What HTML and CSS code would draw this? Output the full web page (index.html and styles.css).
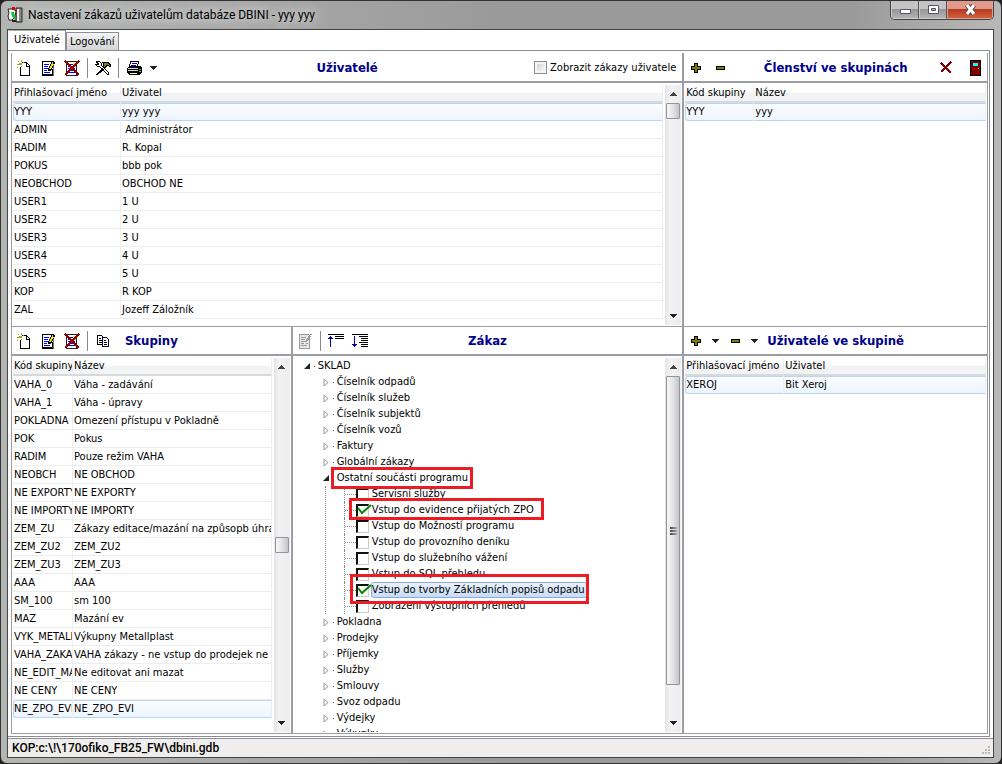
FILE: index.html
```
<!DOCTYPE html>
<html lang="cs">
<head>
<meta charset="utf-8">
<title>Nastavení zákazů uživatelům databáze DBINI - yyy yyy</title>
<link rel="stylesheet" href="styles.css">
</head>
<body>
<svg class="sprite" aria-hidden="true">
  <symbol id="i-new" viewBox="0 0 16 16">
    <path d="M4 4h5l4 4v7H4z" fill="#fff"/>
    <path d="M6 2.500h4.500l3 3V15.500H4.500V7M10.500 3v3h3" fill="none" stroke="#000"/>
    <path d="M2 1h1v1H2zM5 0h1v2H5zM1 4h2v1H1zM3 3h3v2H3zM7 2h1v1H7zM5 6h1v1H5zM1 7h1v1H1z" fill="#a8a020"/>
  </symbol>
  <symbol id="i-edit" viewBox="0 0 16 16">
    <path d="M2 2h10v13H2z" fill="#fff"/>
    <path d="M2.500 1.500h9M2.500 1v14M12.500 9v6" fill="none" stroke="#000"/>
    <path d="M2 15h11" stroke="#000" stroke-width="2"/>
    <path d="M13.500 6v10" stroke="#777"/>
    <path d="M4 4.500h5M4 6.500h4M4 8.500h4M4 10.500h3M9 10.500h2M4 12.500h6" stroke="#00f" stroke-width="1.500"/>
    <path d="M8 8h1V6h1V4h1V2h1V1h2v1h1v2h-1v2h-1v2h-1v2h-2v1H8z" fill="#000"/>
    <path d="M9 8h1V6h1V4h1V2h1v2h1v1h-1v1h-1v2h-1v1H9z" fill="#ffe000"/>
  </symbol>
  <symbol id="i-edit-off" viewBox="0 0 16 16">
    <path d="M2 1h10v14H2z" fill="#e8e8e8"/>
    <path d="M2.500 1.500h9M2.500 1v14.500h10V5" fill="none" stroke="#999"/>
    <path d="M4 4.500h5M4 6.500h4M4 8.500h4M4 10.500h3M9 10.500h2M4 12.500h6M13 1.500h2" stroke="#999"/>
    <path d="M8 9l4-7 2 1-4 6z" fill="#999"/>
  </symbol>
  <symbol id="i-del" viewBox="0 0 16 16">
    <path d="M3 2h9v12H3z" fill="#fff"/>
    <path d="M2 1.500h11M2.500 1v14M12.500 5v10M2 15.500h12" fill="none" stroke="#222"/>
    <path d="M4 4.500h7M4 6.500h7M4 8.500h7M4 10.500h7M4 12.500h7" stroke="#00f"/>
    <path d="M9 3h3v4H9z" fill="#ffe000"/>
    <path d="M1 1l14 14M15 1L1 15" stroke="#900000" stroke-width="1.500"/>
  </symbol>
  <symbol id="i-tools" viewBox="0 0 16 16">
    <path d="M1 2l3-1 2 2v2l8 8-1 2-9-9H2L0 4l3 1 1-1z" fill="#fff" stroke="#000"/>
    <path d="M9 7l-8 8M10 8l-8 7" stroke="#000"/>
    <path d="M7 2h6l3 4h-2l-2-1-2 3-2-2 1-2z" fill="#807c10" stroke="#000"/>
  </symbol>
  <symbol id="i-print" viewBox="0 0 16 16">
    <path d="M5 1h8l-2 6H3z" fill="#fff" stroke="#000"/>
    <path d="M6 3.500h5M5 5.500h5" stroke="#00f"/>
    <path d="M1 8l3-2h10l2 2v4l-3 3H3l-2-3z" fill="#000"/>
    <path d="M2 8.500h10M2 10.500h10" stroke="#ddd"/>
    <path d="M4 13.500h7" stroke="#fff"/>
    <path d="M13 9.500h2M13 11.500h2" stroke="#999"/>
  </symbol>
  <symbol id="i-copy" viewBox="0 0 16 16">
    <path d="M2.500 2.500h4l2 2v7h-6z" fill="#fff" stroke="#000"/>
    <path d="M7.500 4.500h4l2 2v7h-6z" fill="#fff" stroke="#000050"/>
    <path d="M4 5.500h2M4 7.500h3M4 9.500h3M9 7.500h2M9 9.500h3M9 11.500h3" stroke="#000"/>
  </symbol>
  <symbol id="i-up" viewBox="0 0 18 16">
    <path d="M1 1.500h16M8 3.500h9M8 5.500h9" stroke="#000"/>
    <path d="M1 5h1V4h1V3h1v1h1v1h1v1H4v8H3V6H1z" fill="#0000a0"/>
  </symbol>
  <symbol id="i-down" viewBox="0 0 18 16">
    <path d="M1 1.500h16M8 3.500h9M10 5.500h7M10 7.500h7M8 9.500h9M10 11.500h7M10 13.500h7" stroke="#000"/>
    <path d="M3 3h1v8h2v1H5v1H4v1H3v-1H2v-1H1v-1h2z" fill="#0000a0"/>
  </symbol>
  <symbol id="i-plus" viewBox="0 0 16 16">
    <path d="M6 3h4v3h3v4h-3v3H6v-3H3V6h3z" fill="#000"/>
    <path d="M7 4h2v3h3v2H9v3H7V9H4V7h3z" fill="#808000"/>
  </symbol>
  <symbol id="i-minus" viewBox="0 0 16 16">
    <path d="M4 6h9v4H4z" fill="#000"/><path d="M5 7h7v2H5z" fill="#808000"/>
  </symbol>
  <symbol id="i-cross" viewBox="0 0 16 16">
    <path d="M3 3l10 10M13 2L3 12" stroke="#800000" stroke-width="2"/>
  </symbol>
  <symbol id="i-door" viewBox="0 0 16 16">
    <path d="M3 0h11v16H3z" fill="#000"/><path d="M4 1h9v14H4z" fill="#800000"/>
    <path d="M6 3h5v3H6z" fill="#0ff"/><path d="M11 8h1v1h-1z" fill="#ff0"/>
  </symbol>
  <symbol id="i-drop" viewBox="0 0 7 4"><path d="M0 0h7v1H6v1H5v1H4v1H3V3H2V2H1V1H0z" fill="#222"/></symbol>
  <symbol id="i-rise" viewBox="0 0 7 4"><path d="M0 4h7V3H6V2H5V1H4V0H3v1H2v1H1v1H0z" fill="#444"/></symbol>
  <symbol id="i-closed" viewBox="0 0 6 9"><path d="M1 1v7l4-3.500z" fill="#fff" stroke="#999"/></symbol>
  <symbol id="i-open" viewBox="0 0 6 6"><path d="M6 0v6H0z" fill="#222"/></symbol>
  <symbol id="i-tick" viewBox="0 0 15 12"><path d="M1 4l4 5 9-8" fill="none" stroke="#080" stroke-width="2"/></symbol>
</svg>
<div class="window">
  <header class="titlebar">
    <svg class="app-icon" viewBox="0 0 16 16">
      <path d="M9 1h6v14H9z" fill="#888" stroke="#222"/><path d="M10 2h2v12h-2z" fill="#eee"/>
      <path d="M1 2h5l3 2-1 6-3 3H2L1 9l1-3z" fill="#fff" stroke="#222"/>
      <path d="M5 0h3v3H5zM9 3h1v2H9z" fill="#d00"/><path d="M4 5h3v2l2 2-2 3-2-3z" fill="#0c2"/><path d="M5 13h4v2H5z" fill="#222"/>
    </svg>
    <h1>Nastavení zákazů uživatelům databáze DBINI - yyy yyy</h1>
    <div class="controls">
      <button class="ctl" aria-label="Minimalizovat"><svg viewBox="0 0 13 11"><path d="M1.500 5.500h10v4h-10z" fill="#fff" stroke="#556"/></svg></button>
      <button class="ctl" aria-label="Maximalizovat"><svg viewBox="0 0 13 11"><path d="M1.500 1.500h10v8h-10z" fill="#fff" stroke="#556"/><path d="M4.500 4.500h4v2h-4z" fill="#aaa" stroke="#556"/></svg></button>
      <button class="ctl close" aria-label="Zavřít"><svg viewBox="0 0 13 11"><path d="M3 1l7 9M10 1l-7 9" stroke="#545" stroke-width="5"/><path d="M3 1l7 9M10 1l-7 9" stroke="#fff" stroke-width="3"/></svg></button>
    </div>
  </header>
  <main class="client">
    <nav class="tabs"><button class="tab on">Uživatelé</button><button class="tab">Logování</button></nav>
    <div class="page">
      <div class="upper">
        <section class="panel">
          <div class="toolbar">
            <div class="tools">
              <button class="tool" aria-label="Nový"><svg><use href="#i-new"/></svg></button>
              <button class="tool" aria-label="Upravit"><svg><use href="#i-edit"/></svg></button>
              <button class="tool" aria-label="Smazat"><svg><use href="#i-del"/></svg></button>
              <i class="sep"></i>
              <button class="tool" aria-label="Nástroje"><svg><use href="#i-tools"/></svg></button>
              <i class="sep"></i>
              <button class="tool" aria-label="Tisk"><svg><use href="#i-print"/></svg></button>
              <button class="drop" aria-label="Možnosti tisku"><svg><use href="#i-drop"/></svg></button>
            </div>
            <h2>Uživatelé</h2>
            <div class="tools end"><label class="show"><input type="checkbox">Zobrazit zákazy uživatele</label></div>
          </div>
          <div class="body">
            <div class="sheet">
              <table>
                <colgroup><col class="w-login"><col></colgroup>
                <thead><tr><th>Přihlašovací jméno</th><th>Uživatel</th></tr></thead>
                <tbody>
                  <tr class="sel"><td>YYY</td><td>yyy yyy</td></tr>
                  <tr><td>ADMIN</td><td>&nbsp;Administrátor</td></tr>
                  <tr><td>RADIM</td><td>R. Kopal</td></tr>
                  <tr><td>POKUS</td><td>bbb pok</td></tr>
                  <tr><td>NEOBCHOD</td><td>OBCHOD NE</td></tr>
                  <tr><td>USER1</td><td>1 U</td></tr>
                  <tr><td>USER2</td><td>2 U</td></tr>
                  <tr><td>USER3</td><td>3 U</td></tr>
                  <tr><td>USER4</td><td>4 U</td></tr>
                  <tr><td>USER5</td><td>5 U</td></tr>
                  <tr><td>KOP</td><td>R KOP</td></tr>
                  <tr><td>ZAL</td><td>Jozeff Záložník</td></tr>
                </tbody>
              </table>
            </div>
            <div class="scroll at-top"><svg><use href="#i-rise"/></svg><div class="track"><div class="thumb"></div></div><svg><use href="#i-drop"/></svg></div>
          </div>
        </section>
        <section class="panel">
          <div class="toolbar">
            <div class="tools">
              <button class="tool" aria-label="Přidat"><svg><use href="#i-plus"/></svg></button>
              <button class="tool" aria-label="Odebrat"><svg><use href="#i-minus"/></svg></button>
            </div>
            <h2>Členství ve skupinách</h2>
            <div class="tools end apart">
              <button class="tool" aria-label="Zrušit"><svg><use href="#i-cross"/></svg></button>
              <button class="tool" aria-label="Konec"><svg><use href="#i-door"/></svg></button>
            </div>
          </div>
          <div class="body">
            <div class="sheet">
              <table>
                <colgroup><col class="w-member"><col></colgroup>
                <thead><tr><th>Kód skupiny</th><th>Název</th></tr></thead>
                <tbody><tr class="sel"><td>YYY</td><td>yyy</td></tr></tbody>
              </table>
            </div>
          </div>
        </section>
      </div>
      <div class="lower">
        <section class="panel">
          <div class="toolbar">
            <div class="tools">
              <button class="tool" aria-label="Nová skupina"><svg><use href="#i-new"/></svg></button>
              <button class="tool" aria-label="Upravit skupinu"><svg><use href="#i-edit"/></svg></button>
              <button class="tool" aria-label="Smazat skupinu"><svg><use href="#i-del"/></svg></button>
              <i class="sep"></i>
              <button class="tool" aria-label="Kopírovat"><svg><use href="#i-copy"/></svg></button>
            </div>
            <h2>Skupiny</h2>
          </div>
          <div class="body">
            <div class="sheet">
              <table>
                <colgroup><col class="w-group"><col></colgroup>
                <thead><tr><th>Kód skupiny</th><th>Název</th></tr></thead>
                <tbody>
                  <tr><td>VAHA_0</td><td>Váha - zadávání</td></tr>
                  <tr><td>VAHA_1</td><td>Váha - úpravy</td></tr>
                  <tr><td>POKLADNA</td><td>Omezení přístupu v Pokladně</td></tr>
                  <tr><td>POK</td><td>Pokus</td></tr>
                  <tr><td>RADIM</td><td>Pouze režim VAHA</td></tr>
                  <tr><td>NEOBCH</td><td>NE OBCHOD</td></tr>
                  <tr><td>NE EXPORTY</td><td>NE EXPORTY</td></tr>
                  <tr><td>NE IMPORTY</td><td>NE IMPORTY</td></tr>
                  <tr><td>ZEM_ZU</td><td>Zákazy editace/mazání na způsopb úhrad</td></tr>
                  <tr><td>ZEM_ZU2</td><td>ZEM_ZU2</td></tr>
                  <tr><td>ZEM_ZU3</td><td>ZEM_ZU3</td></tr>
                  <tr><td>AAA</td><td>AAA</td></tr>
                  <tr><td>SM_100</td><td>sm 100</td></tr>
                  <tr><td>MAZ</td><td>Mazání ev</td></tr>
                  <tr><td>VYK_METALL</td><td>Výkupny Metallplast</td></tr>
                  <tr><td>VAHA_ZAKA</td><td>VAHA zákazy - ne vstup do prodejek ne p</td></tr>
                  <tr><td>NE_EDIT_MA</td><td>Ne editovat ani mazat</td></tr>
                  <tr><td>NE CENY</td><td>NE CENY</td></tr>
                  <tr class="sel"><td>NE_ZPO_EVI</td><td>NE_ZPO_EVI</td></tr>
                </tbody>
              </table>
            </div>
            <div class="scroll at-mid"><svg><use href="#i-rise"/></svg><div class="track"><div class="thumb"></div></div><svg><use href="#i-drop"/></svg></div>
          </div>
        </section>
        <section class="panel">
          <div class="toolbar">
            <div class="tools">
              <button class="tool" aria-label="Upravit zákaz" disabled><svg><use href="#i-edit-off"/></svg></button>
              <i class="sep"></i>
              <button class="tool wide" aria-label="Sbalit"><svg><use href="#i-up"/></svg></button>
              <button class="tool wide" aria-label="Rozbalit"><svg><use href="#i-down"/></svg></button>
            </div>
            <h2>Zákaz</h2>
          </div>
          <div class="body">
            <div class="sheet">
              <ul class="tree">
                <li class="root"><div class="node"><svg class="open"><use href="#i-open"/></svg><i class="dot"></i><span>SKLAD</span></div>
                  <ul class="branch">
                    <li><div class="node"><svg class="closed"><use href="#i-closed"/></svg><i class="dot"></i><span>Číselník odpadů</span></div></li>
                    <li><div class="node"><svg class="closed"><use href="#i-closed"/></svg><i class="dot"></i><span>Číselník služeb</span></div></li>
                    <li><div class="node"><svg class="closed"><use href="#i-closed"/></svg><i class="dot"></i><span>Číselník subjektů</span></div></li>
                    <li><div class="node"><svg class="closed"><use href="#i-closed"/></svg><i class="dot"></i><span>Číselník vozů</span></div></li>
                    <li><div class="node"><svg class="closed"><use href="#i-closed"/></svg><i class="dot"></i><span>Faktury</span></div></li>
                    <li><div class="node"><svg class="closed"><use href="#i-closed"/></svg><i class="dot"></i><span>Globální zákazy</span></div></li>
                    <li><div class="node"><svg class="open"><use href="#i-open"/></svg><i class="dot"></i><span>Ostatní součásti programu</span><b class="mark mark-a"></b></div>
                      <ul class="leaves">
                        <li><label class="node"><input type="checkbox"><span>Servisní služby</span></label></li>
                        <li><label class="node"><input type="checkbox" checked><svg class="tick"><use href="#i-tick"/></svg><span>Vstup do evidence přijatých ZPO</span><b class="mark mark-b"></b></label></li>
                        <li><label class="node"><input type="checkbox"><span>Vstup do Možností programu</span></label></li>
                        <li><label class="node"><input type="checkbox"><span>Vstup do provozního deníku</span></label></li>
                        <li><label class="node"><input type="checkbox"><span>Vstup do služebního vážení</span></label></li>
                        <li><label class="node"><input type="checkbox"><span>Vstup do SQL přehledu</span></label></li>
                        <li><label class="node"><input type="checkbox" checked><svg class="tick"><use href="#i-tick"/></svg><span class="picked">Vstup do tvorby Základních popisů odpadu</span><b class="mark mark-c"></b></label></li>
                        <li><label class="node"><input type="checkbox"><span>Zobrazení výstupních přehledů</span></label></li>
                      </ul>
                    </li>
                    <li><div class="node"><svg class="closed"><use href="#i-closed"/></svg><i class="dot"></i><span>Pokladna</span></div></li>
                    <li><div class="node"><svg class="closed"><use href="#i-closed"/></svg><i class="dot"></i><span>Prodejky</span></div></li>
                    <li><div class="node"><svg class="closed"><use href="#i-closed"/></svg><i class="dot"></i><span>Příjemky</span></div></li>
                    <li><div class="node"><svg class="closed"><use href="#i-closed"/></svg><i class="dot"></i><span>Služby</span></div></li>
                    <li><div class="node"><svg class="closed"><use href="#i-closed"/></svg><i class="dot"></i><span>Smlouvy</span></div></li>
                    <li><div class="node"><svg class="closed"><use href="#i-closed"/></svg><i class="dot"></i><span>Svoz odpadu</span></div></li>
                    <li><div class="node"><svg class="closed"><use href="#i-closed"/></svg><i class="dot"></i><span>Výdejky</span></div></li>
                    <li><div class="node"><svg class="closed"><use href="#i-closed"/></svg><i class="dot"></i><span>Výkupky</span></div></li>
                  </ul>
                </li>
              </ul>
            </div>
            <div class="scroll long"><svg><use href="#i-rise"/></svg><div class="track"><div class="thumb"><i></i><i></i><i></i></div></div><svg><use href="#i-drop"/></svg></div>
          </div>
        </section>
        <section class="panel">
          <div class="toolbar">
            <div class="tools">
              <button class="tool" aria-label="Přidat uživatele"><svg><use href="#i-plus"/></svg></button>
              <button class="drop" aria-label="Možnosti přidání"><svg><use href="#i-drop"/></svg></button>
              <button class="tool" aria-label="Odebrat uživatele"><svg><use href="#i-minus"/></svg></button>
              <button class="drop" aria-label="Možnosti odebrání"><svg><use href="#i-drop"/></svg></button>
            </div>
            <h2>Uživatelé ve skupině</h2>
          </div>
          <div class="body">
            <div class="sheet">
              <table>
                <colgroup><col class="w-user"><col></colgroup>
                <thead><tr><th>Přihlašovací jméno</th><th>Uživatel</th></tr></thead>
                <tbody><tr class="sel"><td>XEROJ</td><td>Bit Xeroj</td></tr></tbody>
              </table>
            </div>
          </div>
        </section>
      </div>
    </div>
    <footer class="status"><span>KOP:c:\!\170ofiko_FB25_FW\dbini.gdb</span>
      <svg class="grip" viewBox="0 0 12 12"><path d="M8 1h2v2H8zM5 4h2v2H5zM8 4h2v2H8zM2 7h2v2H2zM5 7h2v2H5zM8 7h2v2H8z" fill="#bbb"/></svg>
    </footer>
  </main>
</div>
</body>
</html>
```
FILE: styles.css
```
* { box-sizing: border-box; }
body {
  margin: 0;
  background: #222;
  color: #000;
  font: 11px/16px "DejaVu Sans Condensed", "Noto Sans", sans-serif;
}
button, input { font: inherit; color: inherit; margin: 0; }
ul { list-style: none; margin: 0; padding: 0; }
.sprite { position: absolute; width: 0; height: 0; }

.window {
  display: flex;
  flex-direction: column;
  height: 100vh;
  padding: 0 7px 5px 6px;
  border: 1px solid #333;
  border-radius: 7px;
  background: linear-gradient(90deg, #b4b6b4, #9a9a9a 50%, #9a9a9a 85%, #b8b8b8);
}
.titlebar {
  display: flex;
  align-items: center;
  gap: 5px;
  height: 28px;
}
.app-icon { width: 16px; height: 16px; }
.titlebar h1 {
  flex: 1;
  margin: 0;
  font: 12px/18px Roboto, "Noto Sans", sans-serif;
  text-shadow: 0 0 8px #ddd, 0 0 12px #ddd;
}
.controls {
  display: flex;
  align-self: flex-start;
  border: 1px solid #444;
  border-top: 0;
  border-radius: 0 0 5px 5px;
  overflow: hidden;
}
.ctl {
  width: 28px;
  height: 18px;
  padding: 0;
  border: 1px solid #ccc;
  border-top: 0;
  border-right-color: #555;
  background: linear-gradient(#c4c4c4 45%, #969696 50%, #b4b4b4);
}
.ctl svg { width: 13px; height: 11px; display: block; margin: auto; }
.ctl.close { width: 46px; border-color: #e0a090; background: linear-gradient(#e09a8a 45%, #b83a20 50%, #d0603c); }

.client {
  display: flex;
  flex-direction: column;
  flex: 1;
  min-height: 0;
  border: 1px solid #444;
  background: #fff;
}
.tabs { display: flex; align-items: flex-end; height: 20px; }
.tab {
  height: 18px;
  padding: 0 3px;
  border: 1px solid #8c8e96;
  border-bottom: 0;
  background: linear-gradient(#f4f4f4, #d4d4d4);
}
.tab.on { height: 20px; padding: 0 5px 2px; border-color: #aaa #8c8e96 #fff #fff; background: #fff; }
.page {
  display: flex;
  flex-direction: column;
  flex: 1;
  min-height: 0;
  margin-right: 3px;
  padding: 2px 1px 2px 3px;
  border: 1px solid #8c8e96;
  border-left: 0;
}
.upper, .lower { display: grid; min-height: 0; }
.upper { flex: 274; grid-template-columns: minmax(0, 672fr) minmax(0, 306fr); }
.lower { flex: 407; grid-template-columns: minmax(0, 280fr) minmax(0, 392fr) minmax(0, 306fr); }
.panel {
  display: flex;
  flex-direction: column;
  min-width: 0;
  min-height: 0;
  border-left: 1px solid #9c9ca4;
  border-bottom: 1px solid #9c9ca4;
}
.panel + .panel { border-left-width: 2px; }
.panel:last-child { border-right: 1px solid #9c9ca4; }

.toolbar {
  display: grid;
  grid-template-columns: minmax(0, 1fr) auto minmax(0, 1fr);
  align-items: center;
  flex: none;
  height: 29px;
  border-bottom: 2px solid #9c9ca4;
}
.upper .toolbar { height: 30px; padding-top: 1px; }
.toolbar h2 {
  margin: 0;
  color: #00008b;
  font: bold 13px/18px "DejaVu Sans Condensed", "Noto Sans", sans-serif;
  white-space: nowrap;
}
.tools { display: flex; align-items: center; }
.tools.end { justify-content: flex-end; }
.apart { gap: 5px; }
.tool, .drop {
  display: flex;
  align-items: center;
  justify-content: center;
  width: 24px;
  height: 22px;
  padding: 0;
  border: 0;
  background: none;
}
.drop { width: 15px; }
.tool svg { width: 16px; height: 16px; shape-rendering: crispEdges; }
.tool.wide svg { width: 18px; }
.drop svg { width: 7px; height: 4px; shape-rendering: crispEdges; }
.sep { width: 1px; height: 20px; margin: 0 3px; background: #8a8a8a; }
.show { display: flex; align-items: center; gap: 3px; padding-right: 6px; white-space: nowrap; }
.show input {
  appearance: none;
  width: 13px;
  height: 13px;
  border: 1px solid #8e8f8f;
  background: linear-gradient(135deg, #c8ccd0, #fff);
  box-shadow: inset 0 0 0 2px #f4f4f4;
}

.body { display: flex; flex: 1; min-height: 0; padding: 2px 1px 1px; }
.sheet { flex: 1; min-width: 0; overflow: hidden; }
table { width: 100%; table-layout: fixed; border-collapse: separate; border-spacing: 0; }
th, td {
  height: 18px;
  padding: 0 0 0 1px;
  overflow: hidden;
  border-right: 1px solid #eee;
  border-bottom: 1px solid #eee;
  font-weight: normal;
  line-height: 16px;
  text-align: left;
  white-space: nowrap;
}
th { border-bottom: 2px solid #d9d9d9; background: linear-gradient(#fff 45%, #f2f3f5 50%); }
.sel td { border-top: 1px solid #b8d6fb; border-bottom-color: #b8d6fb; background: linear-gradient(#fafcff, #edf5fd); }
.sel td:first-child { border-left: 1px solid #b8d6fb; border-radius: 3px 0 0 3px; padding-left: 0; }
.w-login { width: 108px; }
.w-member { width: 69px; }
.w-group { width: 60px; }
.w-user { width: 99px; }

.scroll {
  display: flex;
  flex-direction: column;
  align-items: center;
  width: 16px;
  margin-left: 2px;
  padding: 7px 0;
  background: linear-gradient(90deg, #e4e4e4, #f2f2f2 30%, #ececec);
}
.scroll svg { flex: none; width: 7px; height: 4px; }
.track { display: flex; flex-direction: column; flex: 1; width: 100%; padding: 7px 1px; }
.thumb {
  display: flex;
  flex-direction: column;
  align-items: center;
  justify-content: center;
  gap: 1px;
  height: 16px;
  border: 1px solid #94959a;
  border-radius: 1px;
  background: linear-gradient(90deg, #f6f6f6, #e6e6e8 45%, #c4c5ca);
}
.at-mid .track { justify-content: center; }
.long .track { padding-bottom: 36px; }
.long .thumb { flex: 1; }
.thumb i { width: 7px; height: 2px; background: linear-gradient(90deg, #444, #aaa); }

.tree { padding-left: 10px; }
.node { position: relative; display: flex; align-items: center; height: 16px; white-space: nowrap; }
.branch { padding-left: 19px; }
.open { width: 6px; height: 6px; margin-right: 4px; }
.closed { width: 6px; height: 9px; margin-right: 4px; }
.dot { width: 1px; height: 1px; margin-right: 3px; background: #666; }
.leaves { margin-left: 2px; padding-left: 18px; border-left: 1px dotted #888; }
.leaves li { display: flex; align-items: center; border-left: 1px dotted #888; }
.leaves li::before { content: ""; width: 11px; border-top: 1px dotted #888; }
.leaves input {
  appearance: none;
  width: 13px;
  height: 13px;
  margin-right: 3px;
  border: 1px solid #ccc;
  border-top: 2px solid #111;
  border-left: 2px solid #111;
  background: #fff;
}
.tick { position: absolute; left: 1px; top: 2px; width: 15px; height: 12px; }
.picked { box-shadow: 0 0 0 1px #84acdd; border-radius: 2px; background: linear-gradient(#eaf2fc, #c6dcf6); padding-right: 1px; line-height: 14px; }
.mark { position: absolute; z-index: 1; border: 3px solid #ed1c24; pointer-events: none; }
.mark-a { left: 8px; top: -3px; width: 142px; height: 22px; }
.mark-b { left: -7px; top: -4px; width: 195px; height: 22px; }
.mark-c { left: -6px; top: -8px; width: 239px; height: 30px; }

.status {
  display: flex;
  align-items: center;
  justify-content: space-between;
  flex: none;
  height: 19px;
  margin-top: 1px;
  padding: 0 1px 0 4px;
  border-top: 1px solid #8c8e96;
  background: #f0eeec;
  font: 500 12px/18px Roboto, "Open Sans", sans-serif;
}
.grip { width: 12px; height: 12px; align-self: flex-end; }
```
